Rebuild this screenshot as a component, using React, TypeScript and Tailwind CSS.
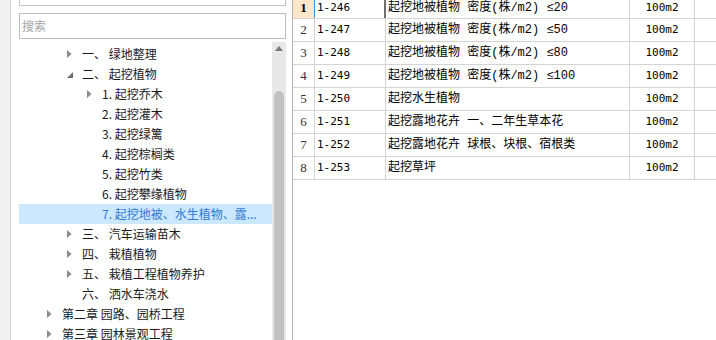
import React from 'react'

type Node = { level: number; label: string; arrow: 'closed' | 'open' | 'none'; selected?: boolean }

const TREE: Node[] = [
  { level: 1, label: '一、 绿地整理', arrow: 'closed' },
  { level: 1, label: '二、 起挖植物', arrow: 'open' },
  { level: 2, label: '1. 起挖乔木', arrow: 'closed' },
  { level: 2, label: '2. 起挖灌木', arrow: 'none' },
  { level: 2, label: '3. 起挖绿篱', arrow: 'none' },
  { level: 2, label: '4. 起挖棕榈类', arrow: 'none' },
  { level: 2, label: '5. 起挖竹类', arrow: 'none' },
  { level: 2, label: '6. 起挖攀缘植物', arrow: 'none' },
  { level: 2, label: '7. 起挖地被、水生植物、露...', arrow: 'none', selected: true },
  { level: 1, label: '三、 汽车运输苗木', arrow: 'closed' },
  { level: 1, label: '四、 栽植植物', arrow: 'closed' },
  { level: 1, label: '五、 栽植工程植物养护', arrow: 'closed' },
  { level: 1, label: '六、 洒水车浇水', arrow: 'none' },
  { level: 0, label: '第二章 园路、园桥工程', arrow: 'closed' },
  { level: 0, label: '第三章 园林景观工程', arrow: 'closed' },
]

const ROWS = [
  { code: '1-246', name: '起挖地被植物 密度(株/m2) ≤20' },
  { code: '1-247', name: '起挖地被植物 密度(株/m2) ≤50' },
  { code: '1-248', name: '起挖地被植物 密度(株/m2) ≤80' },
  { code: '1-249', name: '起挖地被植物 密度(株/m2) ≤100' },
  { code: '1-250', name: '起挖水生植物' },
  { code: '1-251', name: '起挖露地花卉 一、二年生草本花' },
  { code: '1-252', name: '起挖露地花卉 球根、块根、宿根类' },
  { code: '1-253', name: '起挖草坪' },
]

const INDENT = ['pl-[28px]', 'pl-[48px]', 'pl-[68px]']

function Arrow({ kind }: { kind: Node['arrow'] }) {
  if (kind === 'closed')
    return (
      <svg width="5" height="8" viewBox="0 0 5 8">
        <polygon points="0,0 4.5,4 0,8" fill="#8a8a8a" />
      </svg>
    )
  if (kind === 'open')
    return (
      <svg width="6" height="6" viewBox="0 0 6 6" className="mt-[2px]">
        <polygon points="6,0 6,6 0,6" fill="#6e6e6e" />
      </svg>
    )
  return null
}

export default function App() {
  return (
    <div className="flex h-[340px] w-[716px] overflow-hidden bg-white font-['Noto_Sans_CJK_SC',sans-serif] text-[12px]">
      {/* left strip */}
      <div className="w-[11px] shrink-0 border-r border-[#d9d9d9] bg-[#f0f0f0]" />

      {/* tree panel */}
      <div className="flex w-[281px] shrink-0 flex-col pl-[8px] pr-[6px]">
        <div className="h-[6px] shrink-0 border-x border-b border-[#c4c4c4]" />
        <div className="mt-[7px] flex h-[26px] shrink-0 items-center border border-[#bcbcbc] pl-[2px] text-[#a6a6a6]">
          搜索
        </div>
        <div className="mt-[3px] flex min-h-0 flex-1 overflow-hidden">
          <div className="flex-1 pt-[2px]">
            {TREE.map((n, i) => (
              <div
                key={i}
                className={`flex h-[20px] items-center ${INDENT[n.level]} ${
                  n.selected ? 'bg-[#cce8ff] text-[#2f7bd3]' : 'text-[#1a1a1a]'
                }`}
              >
                <div className="flex w-[15px] shrink-0 items-center">
                  <Arrow kind={n.arrow} />
                </div>
                <span className="whitespace-nowrap">{n.label}</span>
              </div>
            ))}
          </div>
          <div className="flex w-[14px] flex-col items-center bg-[#e8e8e8]">
            <svg width="8" height="5" viewBox="0 0 8 5" className="mt-[4px] shrink-0">
              <polygon points="0,5 4,0 8,5" fill="#7a7a7a" />
            </svg>
            <div className="mt-[40px] w-[10px] flex-1 rounded-t-full bg-[#c1c1c1]" />
          </div>
        </div>
      </div>

      {/* table */}
      <div className="flex-1 border-l border-[#b4b4b4]">
        <div className="-mt-[4px]">
          {ROWS.map((r, i) => (
            <div
              key={r.code}
              className={`flex h-[23px] border-b border-[#d4d4d4] text-black ${i === 0 ? 'pt-[2px]' : ''}`}
            >
              <div
                className={`flex w-[22px] shrink-0 items-center justify-center border-r font-['Liberation_Serif',serif] text-[13px] ${
                  i === 0
                    ? 'border-[#3d8ee8] bg-[#fde6c9] font-bold'
                    : 'border-[#d4d4d4] text-[#333]'
                }`}
              >
                {i + 1}
              </div>
              <div
                className={`flex w-[71px] shrink-0 items-center pl-[2px] font-['DejaVu_Sans_Mono',monospace] text-[11px] ${
                  i === 0 ? 'border-r-2 border-[#6f6f6f]' : 'border-r border-[#d4d4d4]'
                }`}
              >
                {r.code}
              </div>
              <div className="flex w-[244px] shrink-0 items-center whitespace-nowrap border-r border-[#d4d4d4] pl-[2px] font-['Liberation_Mono','Noto_Sans_CJK_SC',monospace] text-[12px]">
                {r.name}
              </div>
              <div className="flex w-[65px] shrink-0 items-center justify-center border-r border-[#d4d4d4] font-['DejaVu_Sans_Mono',monospace] text-[11px]">
                100m2
              </div>
              <div className="flex-1" />
            </div>
          ))}
        </div>
      </div>
    </div>
  )
}
